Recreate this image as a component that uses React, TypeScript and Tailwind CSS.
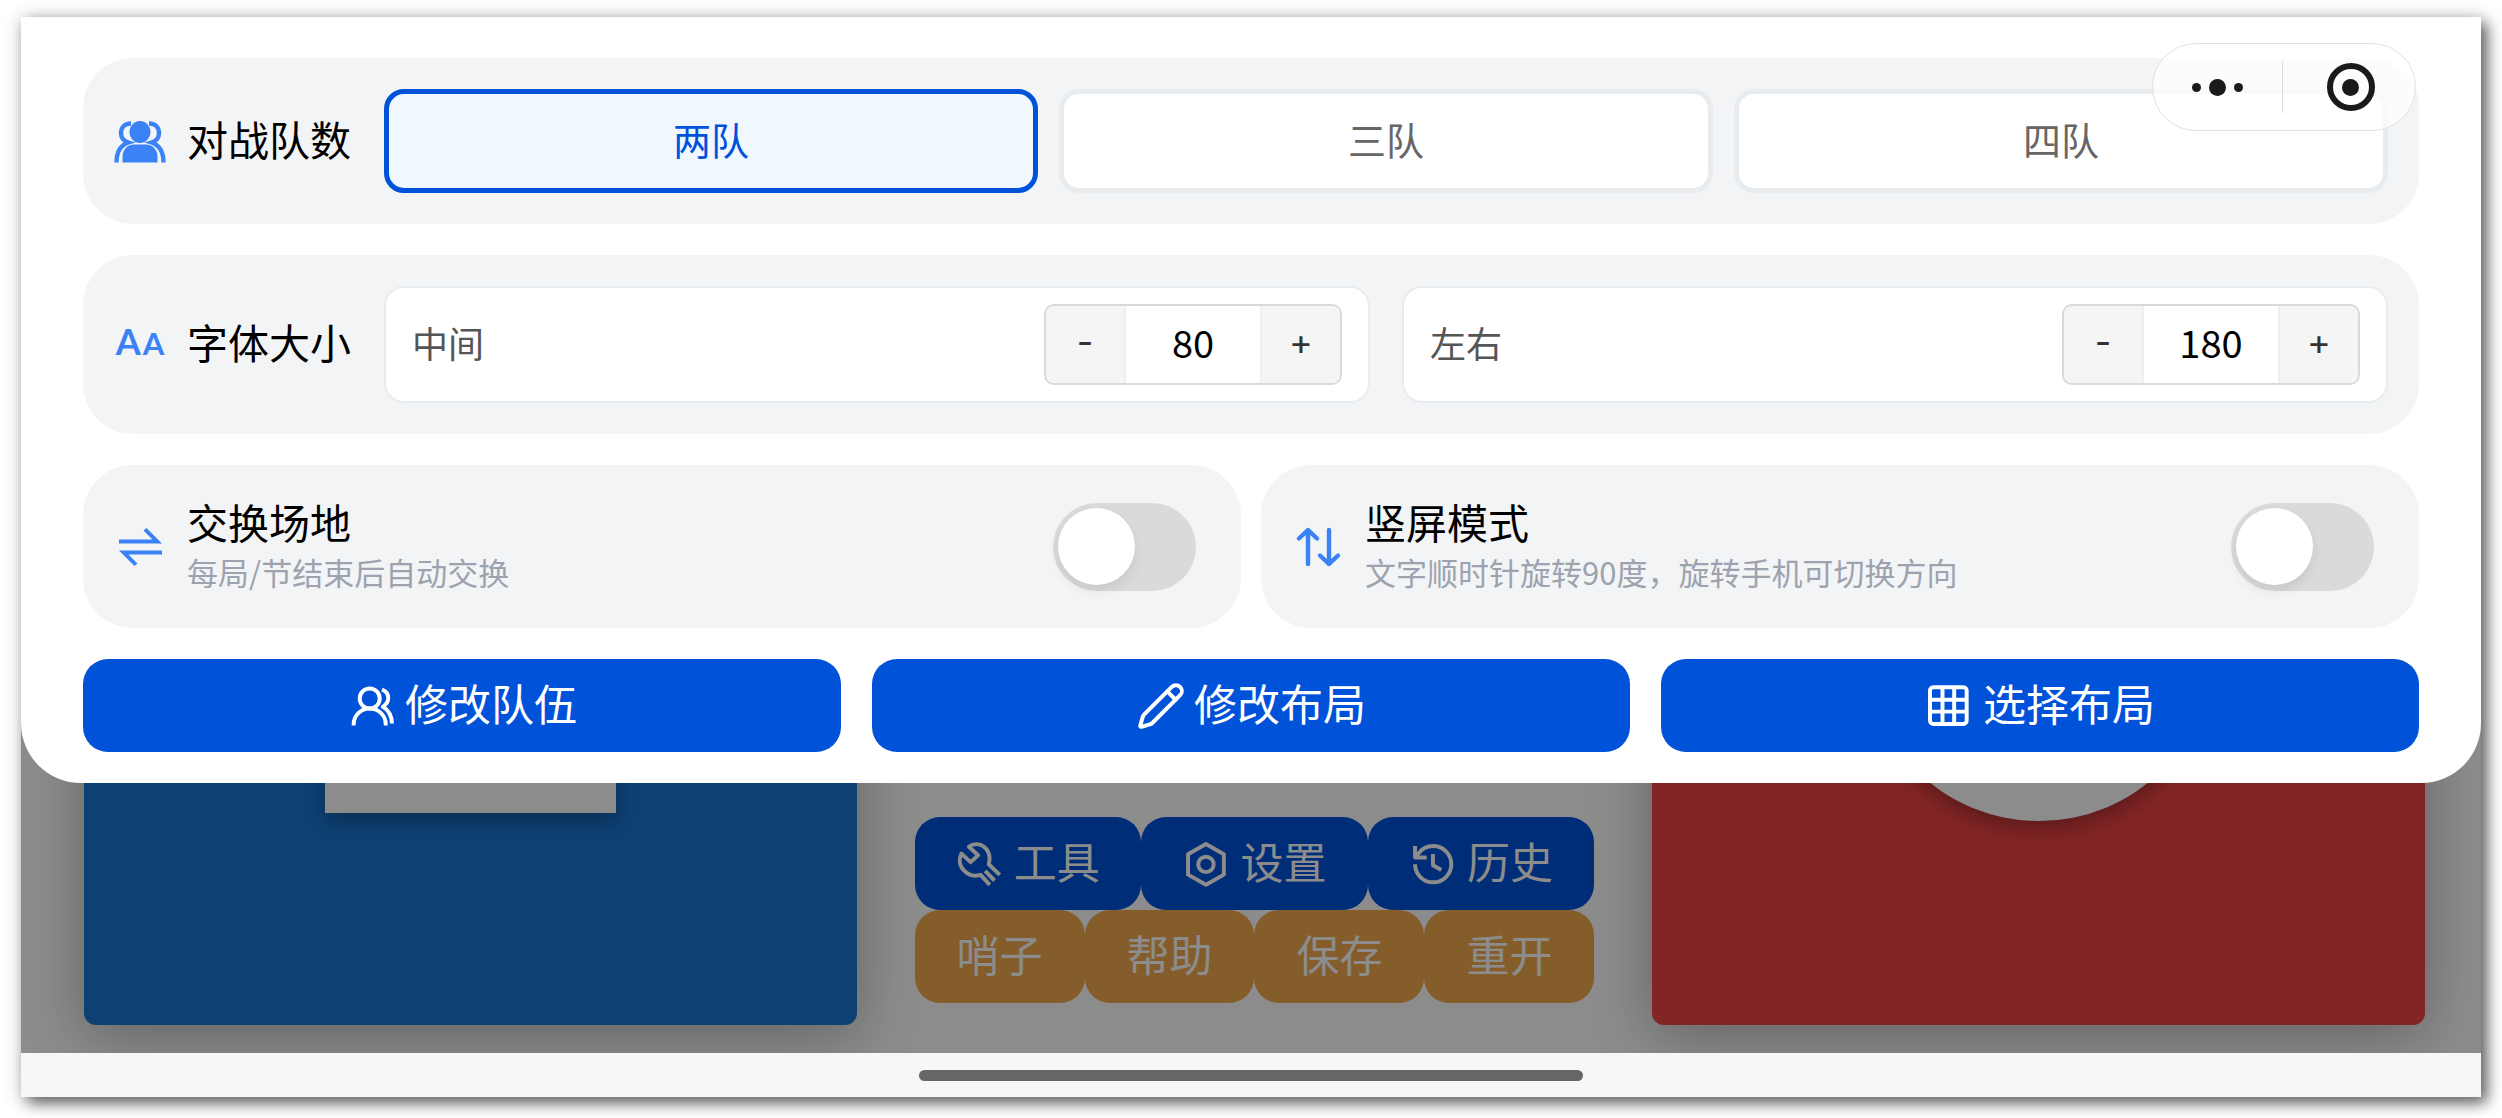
import React, { useState } from 'react';
import { Pencil } from 'lucide-react';

const TEAM_OPTIONS = ['两队', '三队', '四队'];
const EXTRA_ACTIONS = ['哨子', '帮助', '保存', '重开'];

const TeamsIcon = () => (
  <svg viewBox="0 0 52 52" className="size-[52px] shrink-0" fill="none" aria-hidden="true">
    <ellipse cx="26" cy="17" rx="10.5" ry="11" fill="#3b82f6" />
    <path d="M8.5 47.5V42C8.5 35 13 29.5 20 29.5H32C39 29.5 43.5 35 43.5 42V47.5Z" fill="#3b82f6" />
    <g stroke="#3b82f6" strokeWidth="4.4">
      <path d="M17 8.5C10 8.5 7 13 7 18C7 22.5 9.5 26 14.5 27.5C7 30 2.5 36 2.5 47.5" />
      <path d="M35 8.5C42 8.5 45 13 45 18C45 22.5 42.5 26 37.5 27.5C45 30 49.5 36 49.5 47.5" />
    </g>
  </svg>
);

const FontIcon = () => (
  <span
    className="flex w-[52px] shrink-0 items-baseline justify-center gap-[2px] pb-[6px] font-['Lato'] text-[36px] leading-[46px] font-bold text-[#3b82f6]"
    aria-hidden="true"
  >
    A<span className="text-[31px]">A</span>
  </span>
);

const SwapIcon = () => (
  <svg viewBox="0 0 52 52" className="size-[52px] shrink-0" fill="#3b82f6" aria-hidden="true">
    <path d="M5 18.5H38.5L29.5 9.5L32.500 7L48 22.5H5Z" />
    <path d="M48 33.5H14.5L23.5 42.5L20.5 45L5 29.5H48Z" />
  </svg>
);

const PortraitIcon = () => (
  <svg
    viewBox="0 0 52 52"
    className="size-[52px] shrink-0"
    fill="none"
    stroke="#3b82f6"
    strokeWidth="4.4"
    strokeLinecap="round"
    strokeLinejoin="round"
    aria-hidden="true"
  >
    <path d="M16 43V9M7 17.5L16 9L25 17.5" />
    <path d="M37 9V43M28 34.5L37 43L46 34.5" />
  </svg>
);

const LineIcon = ({ children }: { children: React.ReactNode }) => (
  <svg
    viewBox="0 0 24 24"
    className="size-[50px] shrink-0"
    fill="none"
    stroke="currentColor"
    strokeWidth="1.9"
    strokeLinejoin="round"
    aria-hidden="true"
  >
    {children}
  </svg>
);

const MembersIcon = () => (
  <LineIcon>
    <circle cx="10.9" cy="8.4" r="4.8" />
    <path d="M3.2 21.3V20.7a7.7 7.5 0 0 1 15.4 0V21.3" />
    <path d="M16.8 4.1C18.7 4.8 19.8 6.3 19.8 8.2C19.8 10 18.9 11.3 17.2 12.3C20 14 21.5 16.6 21.6 20.4" />
  </LineIcon>
);

const GridIcon = () => (
  <LineIcon>
    <rect x="2.4" y="3" width="17.6" height="17.6" rx="1.6" />
    <path d="M8.4 3V20.6M14 3V20.6M2.4 9H20M2.4 14.7H20" />
  </LineIcon>
);

const ToolsIcon = () => (
  <LineIcon>
    <path d="M21 17.2L15.7 12.1C16.8 8.4 15.6 5 13 3.4C11 2.2 8.3 2.2 6.2 3.7L10.6 7.8L7 11.1L2.6 7C1.2 9.8 1.6 13 4 15.3C6 17.4 9 18 11.8 17.2L16.2 22M14 15.3L18.5 20" />
  </LineIcon>
);

const SettingsIcon = () => (
  <LineIcon>
    <path d="M11.5 2.4L20.1 7.3V17.1L11.5 22L2.9 17.1V7.3Z" />
    <circle cx="11.5" cy="12.2" r="3.7" />
  </LineIcon>
);

const HistoryIcon = () => (
  <LineIcon>
    <path d="M2.9 12.1a8.7 8.7 0 1 0 8.7-8.7c-3 0-5.600 1.400-7.300 3.900L3 8.800" />
    <path d="M2.9 3.300V8.900H8.500M11.500 7.200V12.600L15.500 14.900" />
  </LineIcon>
);

const MAIN_ACTIONS = [
  { label: '修改队伍', icon: <MembersIcon /> },
  { label: '修改布局', icon: <Pencil className="size-[50px] shrink-0" strokeWidth={1.9} /> },
  { label: '选择布局', icon: <GridIcon /> },
];

const BOARD_ACTIONS = [
  { label: '工具', icon: <ToolsIcon /> },
  { label: '设置', icon: <SettingsIcon /> },
  { label: '历史', icon: <HistoryIcon /> },
];

interface StepperProps {
  id: string;
  label: string;
  value: number;
  onChange: (v: number) => void;
}

const Stepper: React.FC<StepperProps> = ({ id, label, value, onChange }) => (
  <div className="flex flex-1 items-center justify-between rounded-[20px] border-2 border-[#e9ecef] bg-white px-[26px] py-4">
    <label htmlFor={id} className="pb-[6px] text-[36px] leading-[50px] text-[#555555]">{label}</label>
    <div className="flex h-[81px] overflow-hidden rounded-[10px] border-2 border-[#d9d9d9] text-[#333333]">
      <button
        type="button"
        aria-label={`减小${label}`}
        onClick={() => onChange(value - 1)}
        className="w-20 border-r-2 border-[#eeeeee] bg-[#f5f5f5] pb-[6px] font-['Inter'] text-[36px]"
      >
        -
      </button>
      <input
        id={id}
        inputMode="numeric"
        value={value}
        onChange={e => onChange(Number(e.target.value) || 0)}
        className="w-[134px] bg-white pb-[6px] text-center text-[38px] text-black outline-none"
      />
      <button
        type="button"
        aria-label={`增大${label}`}
        onClick={() => onChange(value + 1)}
        className="w-20 border-l-2 border-[#eeeeee] bg-[#f5f5f5] pb-[6px] font-['Inter'] text-[36px]"
      >
        +
      </button>
    </div>
  </div>
);

interface SwitchCardProps {
  id: string;
  icon: React.ReactNode;
  title: string;
  hint: string;
  checked: boolean;
  onChange: (v: boolean) => void;
}

const SwitchCard: React.FC<SwitchCardProps> = ({ id, icon, title, hint, checked, onChange }) => (
  <div className="flex flex-1 items-center rounded-[50px] bg-[#f3f4f6] py-[31px] pr-[45px] pl-[31px]">
    {icon}
    <label htmlFor={id} className="ml-[21px] flex-1">
      <span className="block text-[41px] leading-[51px] text-black">{title}</span>
      <span className="block text-[31px] leading-[50px] text-[#9ca3af]">{hint}</span>
    </label>
    <input
      id={id}
      type="checkbox"
      role="switch"
      checked={checked}
      onChange={e => onChange(e.target.checked)}
      className="h-[88px] w-[143px] shrink-0 appearance-none rounded-full bg-[#d9dadc] p-[5px] before:block before:size-[77px] before:rounded-full before:bg-white before:shadow-[0_6px_12px_rgba(0,0,0,0.08)] checked:bg-[#0052d9] checked:before:ml-auto"
    />
  </div>
);

const Scoreboard = () => (
  <div className="col-start-1 row-start-1 flex bg-white pt-[60px] pr-[56px] pb-[28px] pl-[63px]">
    <div className="flex w-[33%] flex-col items-center rounded-xl bg-[#1976d2] shadow-[0_10px_60px_rgba(0,0,0,0.3)]">
      <div className="mt-[386px] h-[350px] w-[291px] bg-white shadow-[0_8px_20px_rgba(0,0,0,0.3)]" />
    </div>
    <div className="flex w-[34%] flex-col justify-end px-[58px] pb-[22px] text-[43px] text-white">
      <div className="flex">
        {BOARD_ACTIONS.map(a => (
          <button
            key={a.label}
            type="button"
            className="flex h-[93px] flex-1 items-center justify-center gap-2 rounded-[25px] bg-[#0052d9]"
          >
            {a.icon}
            <span className="pb-[6px]">{a.label}</span>
          </button>
        ))}
      </div>
      <div className="flex">
        {EXTRA_ACTIONS.map(label => (
          <button key={label} type="button" className="h-[93px] flex-1 rounded-[25px] bg-[#f0a94e] pb-[6px]">
            {label}
          </button>
        ))}
      </div>
    </div>
    <div className="flex w-[33%] flex-col items-center rounded-xl bg-[#ef4444] shadow-[0_10px_60px_rgba(0,0,0,0.3)]">
      <div className="mt-[394px] size-[350px] rounded-full bg-white shadow-[0_8px_20px_rgba(0,0,0,0.3)]" />
    </div>
  </div>
);

// Mini program menu that floats over the top right corner
const Capsule = () => (
  <div className="absolute top-[26px] right-[65px] flex h-[88px] w-[264px] items-center rounded-full border border-[#e2e2e2] bg-white/75">
    <button type="button" aria-label="更多" className="flex flex-1 items-center justify-center gap-2">
      <span className="size-[9px] rounded-full bg-[#1a1a1a]" />
      <span className="size-[17px] rounded-full bg-[#1a1a1a]" />
      <span className="size-[9px] rounded-full bg-[#1a1a1a]" />
    </button>
    <span className="h-[52px] w-px bg-[#dcdcdc]" />
    <button type="button" aria-label="关闭" className="flex flex-1 justify-center pl-1">
      <span className="flex size-12 items-center justify-center rounded-full border-[6px] border-[#1a1a1a]">
        <span className="size-[17px] rounded-full bg-[#1a1a1a]" />
      </span>
    </button>
  </div>
);

const App: React.FC = () => {
  const [teams, setTeams] = useState('两队');
  const [middleSize, setMiddleSize] = useState(80);
  const [sideSize, setSideSize] = useState(180);
  const [swap, setSwap] = useState(false);
  const [portrait, setPortrait] = useState(false);

  return (
    <div className="flex min-h-screen bg-white px-[21px] pt-[17px] pb-[21px] font-['Noto_Sans_CJK_SC',sans-serif]">
      <div className="relative flex flex-1 flex-col overflow-hidden bg-white shadow-[6px_6px_14px_rgba(0,0,0,0.6),0_0_20px_rgba(0,0,0,0.15)]">
        <div className="grid flex-1 overflow-hidden">
          <Scoreboard />

          <div className="col-start-1 row-start-1 bg-black/45">
            <div className="flex flex-col gap-[31px] rounded-b-[60px] bg-white px-[62px] pt-[41px] pb-[31px]">
              {/* Team count */}
              <div className="flex items-center rounded-[50px] bg-[#f3f4f6] p-[31px]">
                <TeamsIcon />
                <span className="ml-[21px] w-[197px] pb-[6px] text-[41px] leading-[57px] text-black">对战队数</span>
                <div className="flex flex-1 gap-[21px]">
                  {TEAM_OPTIONS.map(t => (
                    <button
                      key={t}
                      type="button"
                      aria-pressed={teams === t}
                      onClick={() => setTeams(t)}
                      className={`h-[104px] flex-1 rounded-[20px] border-[5px] pb-[6px] text-[38px]
                        ${teams === t
                          ? 'border-[#0052d9] bg-[#f0f7ff] text-[#0052d9]'
                          : 'border-[#e9ecef] bg-white text-[#666666]'
                        }`}
                    >
                      {t}
                    </button>
                  ))}
                </div>
              </div>

              {/* Font size */}
              <div className="flex items-center rounded-[50px] bg-[#f3f4f6] p-[31px]">
                <FontIcon />
                <span className="ml-[21px] w-[197px] pb-[6px] text-[41px] leading-[57px] text-black">字体大小</span>
                <div className="flex flex-1 gap-8">
                  <Stepper id="middle-size" label="中间" value={middleSize} onChange={setMiddleSize} />
                  <Stepper id="side-size" label="左右" value={sideSize} onChange={setSideSize} />
                </div>
              </div>

              <div className="flex gap-5">
                <SwitchCard
                  id="swap"
                  icon={<SwapIcon />}
                  title="交换场地"
                  hint="每局/节结束后自动交换"
                  checked={swap}
                  onChange={setSwap}
                />
                <SwitchCard
                  id="portrait"
                  icon={<PortraitIcon />}
                  title="竖屏模式"
                  hint="文字顺时针旋转90度，旋转手机可切换方向"
                  checked={portrait}
                  onChange={setPortrait}
                />
              </div>

              <div className="flex gap-[31px]">
                {MAIN_ACTIONS.map(a => (
                  <button
                    key={a.label}
                    type="button"
                    className="flex h-[93px] flex-1 items-center justify-center gap-2 rounded-[25px] bg-[#0052d9] text-[43px] text-white"
                  >
                    {a.icon}
                    <span className="pb-[6px]">{a.label}</span>
                  </button>
                ))}
              </div>
            </div>
          </div>
        </div>

        {/* Home indicator */}
        <div className="flex h-[44px] items-center justify-center bg-[#f7f7f7]">
          <span className="h-[11px] w-[27%] rounded-full bg-[#666666]" />
        </div>

        <Capsule />
      </div>
    </div>
  );
};

export default App;
